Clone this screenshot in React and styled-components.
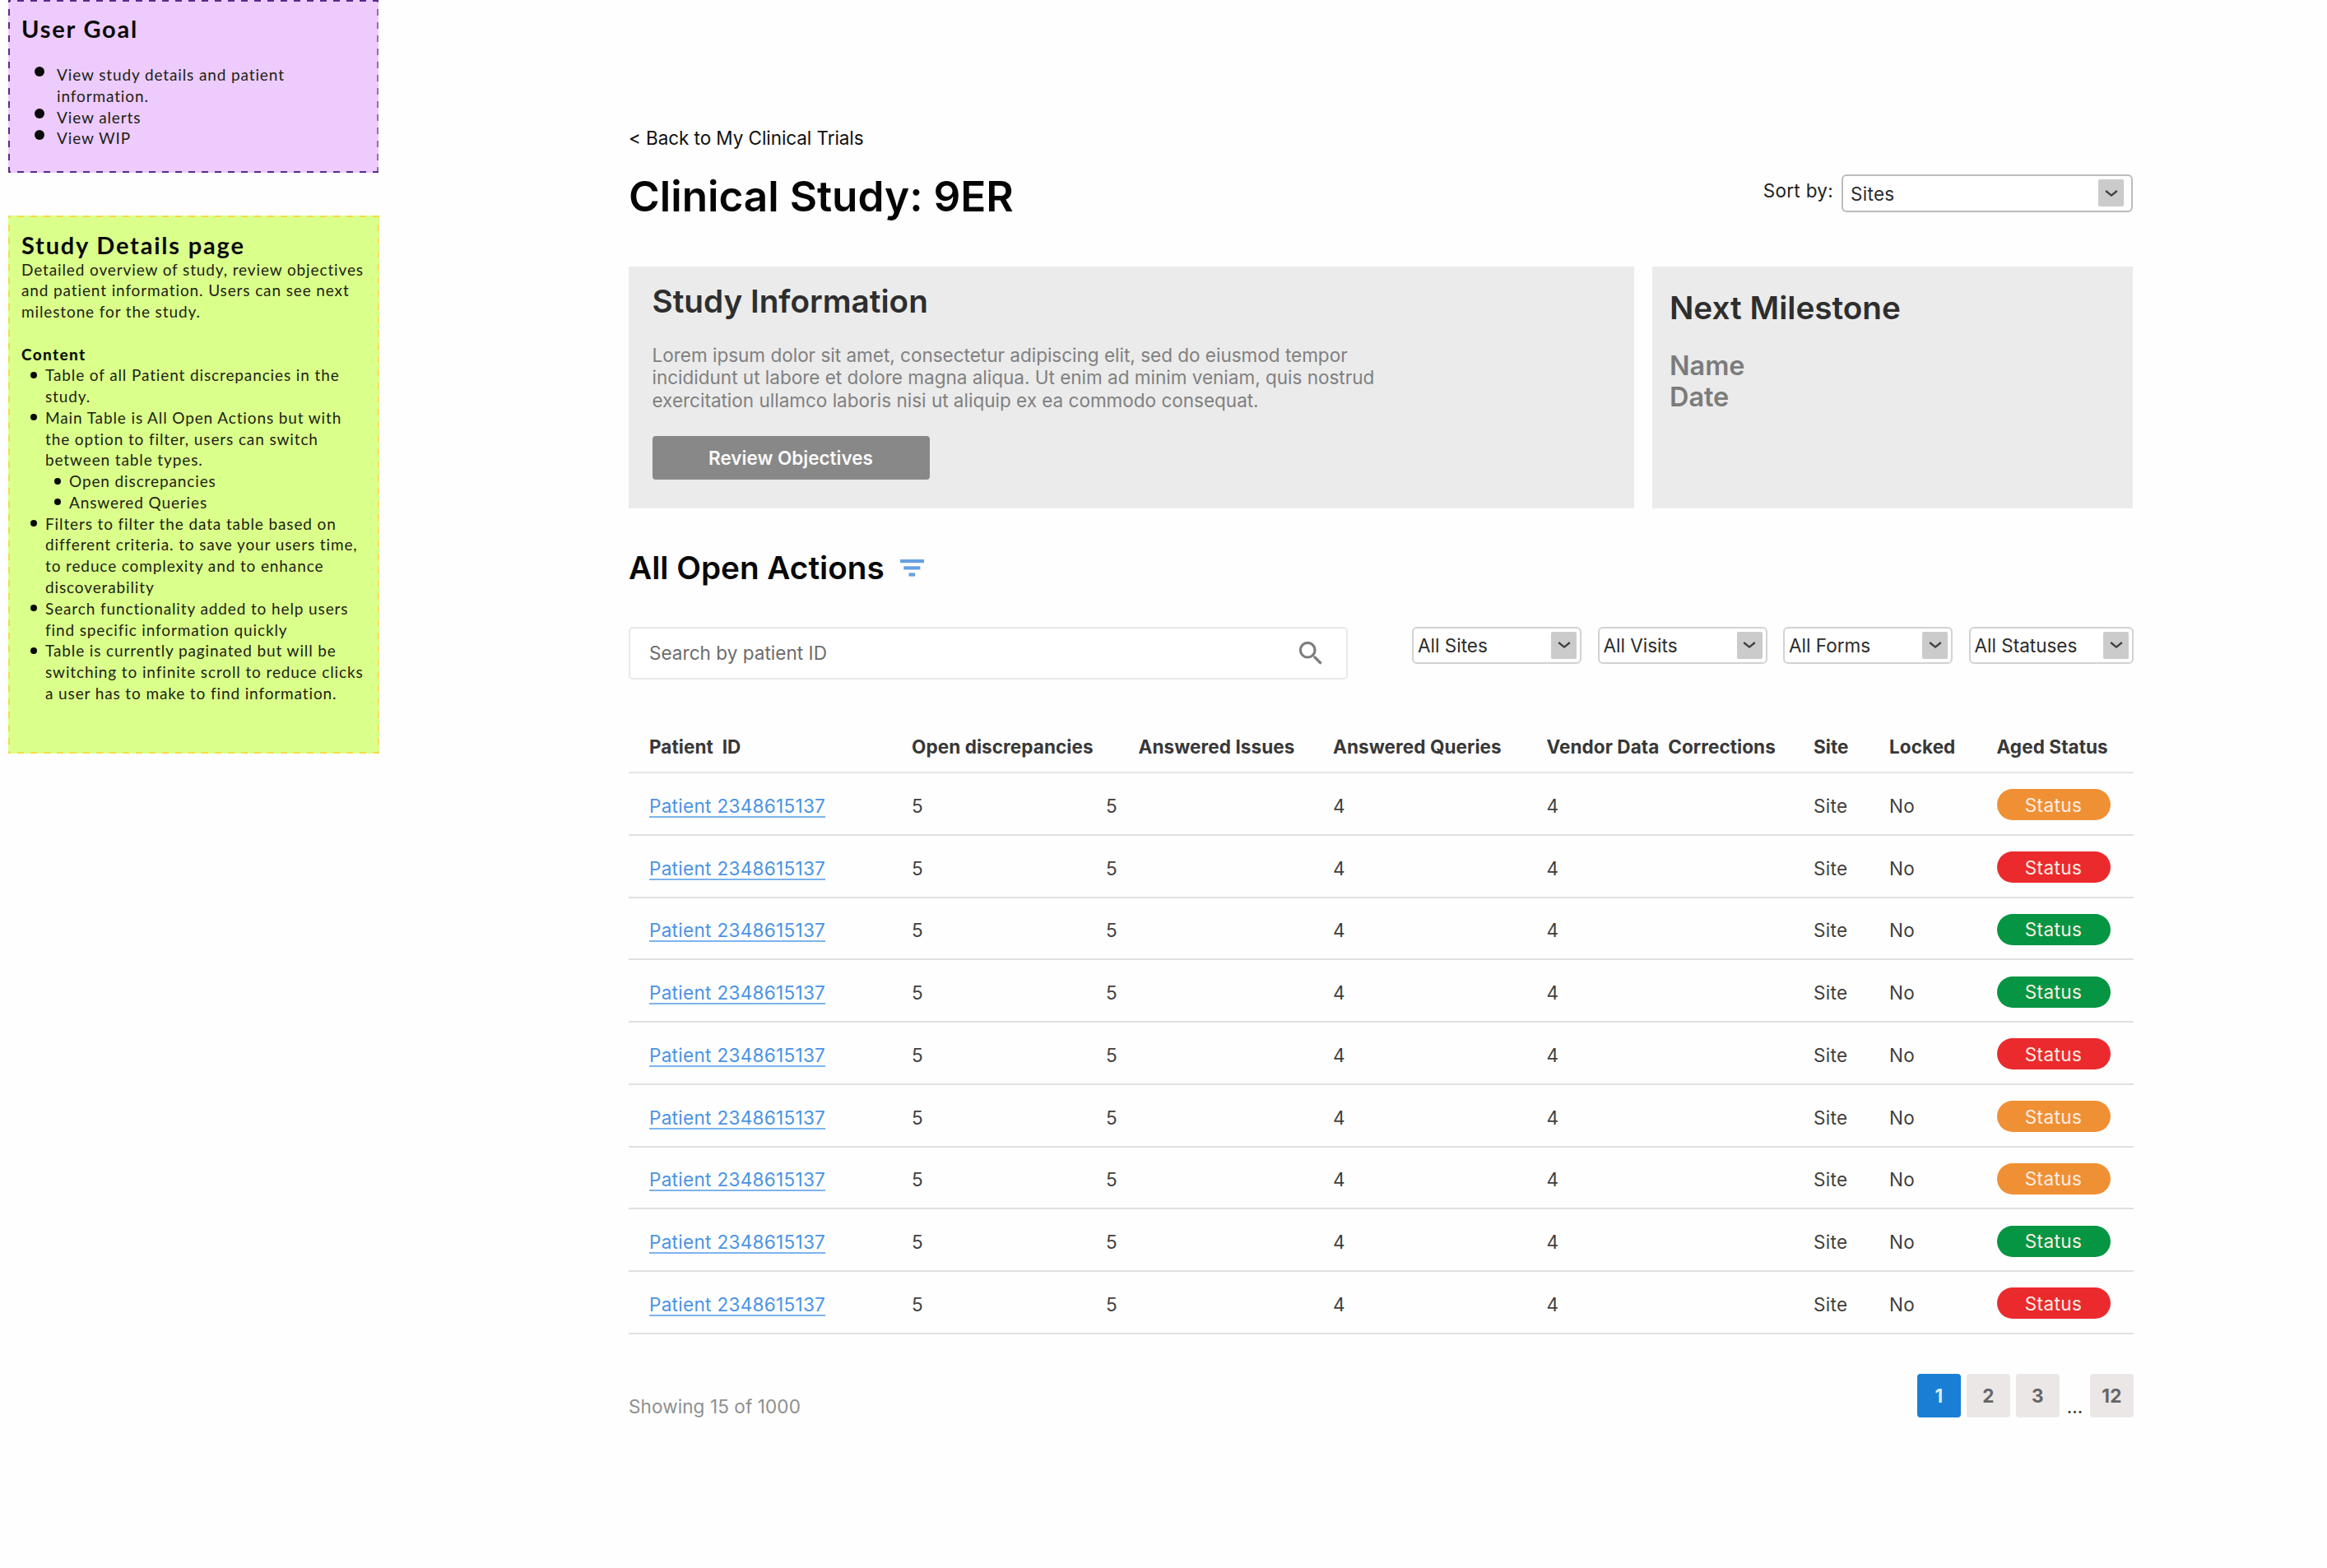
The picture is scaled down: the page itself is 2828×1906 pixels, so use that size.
import React from "react";
import styled, { createGlobalStyle, css } from "styled-components";

const GlobalStyle = createGlobalStyle`
  *, *::before, *::after { box-sizing: border-box; }
  body {
    margin: 0;
    background: #fefefe;
    color: #111;
    font-family: Inter, "Liberation Sans", sans-serif;
    font-size: 22.5px;
    line-height: 28px;
  }
  h1, h2, h3, p, ul { margin: 0; padding: 0; }
  ul { list-style: none; }
`;

const Page = styled.div`
  display: flex;
  align-items: flex-start;
  min-height: 1906px;
  padding-left: 10px;
`;

/* Notes column */

const Notes = styled.aside`
  display: flex;
  flex-direction: column;
  gap: 52px;
  width: 451px;
  font-family: Lato, "Open Sans", sans-serif;
  font-size: 19px;
  line-height: 25.77px;
  letter-spacing: 0.88px;
  white-space: nowrap;
`;

const dashes = (color, right) => css`
  background-image:
    repeating-linear-gradient(90deg, ${color} 0 8px, transparent 8px 16px),
    repeating-linear-gradient(90deg, ${color} 0 8px, transparent 8px 16px),
    repeating-linear-gradient(180deg, ${color} 0 8px, transparent 8px 16px),
    repeating-linear-gradient(180deg, ${right} 0 8px, transparent 8px 16px);
  background-repeat: no-repeat;
  background-size: calc(100% + 5px) 2px, calc(100% + 5px) 2px, 2px calc(100% + 5px), 2px calc(100% + 5px);
  background-position: -5px 0, -5px 100%, 0 -5px, 100% -5px;
`;

const GoalNote = styled.section`
  width: 450px;
  height: 210px;
  padding: 18px 0 0 16px;
  background-color: #edcbfd;
  ${dashes("#5a2a8a", "#9070b0")}
`;

const DetailsNote = styled.section`
  width: 451px;
  height: 654px;
  padding: 18.5px 0 0 16px;
  background-color: #dbff8b;
  ${dashes("#f5dc45", "#f5e060")}
`;

const NoteTitle = styled.h2`
  font-size: 29px;
  font-weight: 700;
  line-height: 34px;
  letter-spacing: 1.8px;
  color: #0a0a0a;
`;

const NoteText = styled.p`
  color: #1c1f14;
`;

const NoteSubtitle = styled.h3`
  margin-top: 25.77px;
  font-size: 19px;
  font-weight: 900;
  letter-spacing: 1.35px;
  color: #0d1206;
`;

const GoalList = styled.ul`
  margin-top: 26px;
`;

const NoteList = styled.ul``;

const Bullet = styled.li`
  display: flex;
  align-items: flex-start;
  padding-left: ${(p) => p.$indent}px;
  color: #1c1f14;

  &::before {
    content: "";
    flex: none;
    width: ${(p) => p.$dot}px;
    height: ${(p) => p.$dot}px;
    margin-top: ${(p) => p.$top}px;
    margin-right: ${(p) => p.$gap}px;
    border-radius: 50%;
    background: #0a0a0a;
  }
`;

/* Main column */

const Main = styled.main`
  display: flex;
  flex-direction: column;
  width: 1829px;
  margin-left: 303px;
  padding-top: 153.5px;
`;

const BackLink = styled.a`
  letter-spacing: -0.07px;
  color: #111;
`;

const Header = styled.header`
  display: flex;
  justify-content: space-between;
  height: 117px;
  margin-top: 25.5px;
  padding-right: 1px;
`;

const Title = styled.h1`
  font-size: 51.3px;
  font-weight: 600;
  line-height: 62px;
  color: #050505;
`;

const SortControl = styled.div`
  display: flex;
  align-items: flex-start;
  gap: 10px;
  padding-top: 5px;
  letter-spacing: 0.3px;
`;

const SortLabel = styled.span`
  padding-top: 6px;
  color: #222;
`;

const SelectBox = styled.div`
  display: flex;
  align-items: center;
  justify-content: space-between;
  width: ${(p) => p.$width}px;
  height: ${(p) => p.$height}px;
  padding: 1px ${(p) => p.$right}px 0 ${(p) => p.$left}px;
  border: 2px solid ${(p) => p.$border};
  border-radius: 6px;
  background: #fff;
  color: #2c2c2c;
  white-space: nowrap;
`;

const SelectArrow = styled.span`
  display: flex;
  align-items: center;
  justify-content: center;
  width: 31px;
  height: 33px;
  margin-top: -2px;
  border-radius: 2px;
  background: #cbcbcb;
`;

const Cards = styled.div`
  display: grid;
  grid-template-columns: 1222px 584px;
  gap: 22px;
  height: 294px;
`;

const Card = styled.section`
  padding: ${(p) => p.$pad};
  background: #ebebeb;
`;

const Heading = styled.h2`
  font-size: 38.7px;
  font-weight: 600;
  line-height: 48px;
  color: ${(p) => p.$color};
`;

const Summary = styled.p`
  margin-top: 28px;
  line-height: 27.4px;
  color: #808080;
`;

const ReviewButton = styled.button`
  display: block;
  width: 337px;
  height: 53px;
  margin-top: 30px;
  padding: 0;
  border: 0;
  border-radius: 4px;
  background: #888;
  color: #fafafa;
  font: 600 22.5px/28px Inter, sans-serif;
`;

const Milestone = styled.p`
  margin-top: 28px;
  font-size: 32.4px;
  font-weight: 600;
  line-height: 38.3px;
  color: #7b7b7b;
`;

const SectionHead = styled.div`
  display: flex;
  align-items: center;
  gap: 19px;
  margin-top: 48px;
`;

const Toolbar = styled.div`
  display: flex;
  justify-content: space-between;
  align-items: flex-start;
  margin-top: 48px;
`;

const SearchBox = styled.div`
  display: flex;
  align-items: center;
  justify-content: space-between;
  width: 874px;
  height: 64px;
  padding: 0 24px 0 23px;
  border: 2px solid #e9e9e9;
  border-radius: 5px;
  background: #fff;
  color: #6c6c6c;
  letter-spacing: 0.04px;
`;

const Filters = styled.div`
  display: flex;
  gap: 19.5px;
`;

const Table = styled.div`
  display: flex;
  flex-direction: column;
  margin-top: 51px;
`;

const HeadRow = styled.div`
  display: grid;
  grid-template-columns: 319px 275.5px 236.5px 259.5px 324.5px 92px 130.5px 1fr;
  align-items: center;
  height: 63px;
  padding: 1px 0 0 25px;
  border-bottom: 2px solid #e6e6e6;
  font-weight: 700;
  letter-spacing: 0.08px;
  color: #383838;
  white-space: pre;
`;

const Row = styled.div`
  display: grid;
  grid-template-columns: 319px 236px 276px 259.5px 324.5px 92px 130.5px 1fr;
  align-items: center;
  height: 75.75px;
  padding: 3px 0 0 25px;
  border-bottom: 2px solid #e0e0e0;
`;

const Cell = styled.span`
  padding-top: 3px;
  letter-spacing: 0.3px;
  color: #3f3f3f;
`;

const PatientLink = styled.a`
  padding-top: 3px;
  color: #4a93e4;
  letter-spacing: 0.31px;
  text-decoration: underline;
  text-decoration-color: #7db4ee;
  text-decoration-thickness: 2px;
  text-underline-offset: 4px;
  text-decoration-skip-ink: none;
`;

const tones = { orange: "#f09035", red: "#eb2a2d", green: "#069543" };

const Pill = styled.span`
  display: flex;
  align-items: center;
  justify-content: center;
  width: 138px;
  height: 38px;
  padding-top: 1px;
  border-radius: 19px;
  background: ${(p) => tones[p.$tone]};
  color: #fdeee2;
  letter-spacing: 0.4px;
`;

const Footer = styled.footer`
  display: flex;
  justify-content: space-between;
  align-items: flex-start;
  margin-top: 48px;
`;

const Count = styled.span`
  padding-top: 26px;
  color: #8f8f8f;
  letter-spacing: 0.1px;
`;

const Pager = styled.nav`
  display: flex;
  gap: 7px;
`;

const PageButton = styled.span`
  display: flex;
  align-items: center;
  justify-content: center;
  width: 53px;
  height: 53px;
  padding-top: 1px;
  border-radius: 4px;
  background: ${(p) => (p.$active ? "#1a7fd4" : "#ebe7e6")};
  color: ${(p) => (p.$active ? "#d9ecff" : "#666")};
  font-weight: 700;
  letter-spacing: 0.4px;
`;

const Ellipsis = styled.span`
  width: 23px;
  padding-top: 26px;
  text-align: center;
  color: #333;
`;

function Chevron() {
  return (
    <svg width="16" height="10" viewBox="0 0 16 10" fill="none">
      <path d="M1.2 2L8 7.6L14.8 2" stroke="#3f3f3f" strokeWidth="2.3" />
    </svg>
  );
}

function FilterIcon() {
  return (
    <svg width="29" height="21" viewBox="0 0 29 21" fill="#67a0e2">
      <rect x="0" y="0" width="29" height="4.2" />
      <rect x="4.3" y="8.3" width="20" height="4.2" />
      <rect x="10.5" y="16.4" width="7.6" height="4.2" />
    </svg>
  );
}

function SearchIcon() {
  return (
    <svg width="38.4" height="38.4" viewBox="0 0 24 24" fill="#7d7d7d">
      <path d="M15.5 14h-.79l-.28-.27A6.471 6.471 0 0 0 16 9.5 6.5 6.5 0 1 0 9.5 16c1.61 0 3.09-.59 4.23-1.57l.27.28v.79l5 4.99L20.49 19l-4.99-5zm-6 0C7.01 14 5 11.99 5 9.5S7.01 5 9.5 5 14 7.01 14 9.5 11.99 14 9.5 14z" />
    </svg>
  );
}

function Select({ label, width, height = 45, left = 5, right = 4, border = "#d2d2d2" }) {
  return (
    <SelectBox $width={width} $height={height} $left={left} $right={right} $border={border}>
      <span>{label}</span>
      <SelectArrow>
        <Chevron />
      </SelectArrow>
    </SelectBox>
  );
}

function Lines({ of }) {
  return (
    <span>
      {of.map((line, i) => (
        <React.Fragment key={line}>
          {i > 0 && <br />}
          {line}
        </React.Fragment>
      ))}
    </span>
  );
}

const goals = [["View study details and patient", "information."], ["View alerts"], ["View WIP"]];

const contents = [
  { lines: ["Table of all Patient discrepancies in the", "study."] },
  { lines: ["Main Table is All Open Actions but with", "the option to filter, users can switch", "between table types."] },
  { lines: ["Open discrepancies"], nested: true },
  { lines: ["Answered Queries"], nested: true },
  {
    lines: [
      "Filters to filter the data table based on",
      "different criteria. to save your users time,",
      "to reduce complexity and to enhance",
      "discoverability",
    ],
  },
  { lines: ["Search functionality added to help users", "find specific information quickly"] },
  {
    lines: [
      "Table is currently paginated but will be",
      "switching to infinite scroll to reduce clicks",
      "a user has to make to find information.",
    ],
  },
];

const columns = [
  "Patient  ID",
  "Open discrepancies",
  "Answered Issues",
  "Answered Queries",
  "Vendor Data  Corrections",
  "Site",
  "Locked",
  "Aged Status",
];

const statuses = ["orange", "red", "green", "green", "red", "orange", "orange", "green", "red"];

export default function App() {
  return (
    <>
      <GlobalStyle />
      <Page>
        <Notes>
          <GoalNote>
            <NoteTitle>User Goal</NoteTitle>
            <GoalList>
              {goals.map((lines) => (
                <Bullet key={lines[0]} $indent={16} $dot={12} $top={2.5} $gap={15}>
                  <Lines of={lines} />
                </Bullet>
              ))}
            </GoalList>
          </GoalNote>
          <DetailsNote>
            <NoteTitle>Study Details page</NoteTitle>
            <NoteText>
              <Lines
                of={[
                  "Detailed overview of study, review objectives",
                  "and patient information. Users can see next",
                  "milestone for the study.",
                ]}
              />
            </NoteText>
            <NoteSubtitle>Content</NoteSubtitle>
            <NoteList>
              {contents.map((item) => (
                <Bullet key={item.lines[0]} $indent={item.nested ? 39.5 : 10.5} $dot={8} $top={8.5} $gap={10.5}>
                  <Lines of={item.lines} />
                </Bullet>
              ))}
            </NoteList>
          </DetailsNote>
        </Notes>

        <Main>
          <BackLink>&lt; Back to My Clinical Trials</BackLink>
          <Header>
            <Title>Clinical Study: 9ER</Title>
            <SortControl>
              <SortLabel>Sort by:</SortLabel>
              <Select label="Sites" width={354} height={46} left={9} right={9} border="#bcbcbc" />
            </SortControl>
          </Header>

          <Cards>
            <Card $pad="18px 0 0 28.5px">
              <Heading $color="#2e2e2e">Study Information</Heading>
              <Summary>
                <Lines
                  of={[
                    "Lorem ipsum dolor sit amet, consectetur adipiscing elit, sed do eiusmod tempor",
                    "incididunt ut labore et dolore magna aliqua. Ut enim ad minim veniam, quis nostrud",
                    "exercitation ullamco laboris nisi ut aliquip ex ea commodo consequat.",
                  ]}
                />
              </Summary>
              <ReviewButton>Review Objectives</ReviewButton>
            </Card>
            <Card $pad="26px 0 0 21px">
              <Heading $color="#2e2e2e">Next Milestone</Heading>
              <Milestone>
                <Lines of={["Name", "Date"]} />
              </Milestone>
            </Card>
          </Cards>

          <SectionHead>
            <Heading $color="#080808">All Open Actions</Heading>
            <FilterIcon />
          </SectionHead>

          <Toolbar>
            <SearchBox>
              <span>Search by patient ID</span>
              <SearchIcon />
            </SearchBox>
            <Filters>
              <Select label="All Sites" width={206} />
              <Select label="All Visits" width={206} />
              <Select label="All Forms" width={206} />
              <Select label="All Statuses" width={200.5} />
            </Filters>
          </Toolbar>

          <Table>
            <HeadRow>
              {columns.map((name) => (
                <span key={name}>{name}</span>
              ))}
            </HeadRow>
            {statuses.map((tone, i) => (
              <Row key={i}>
                <PatientLink>Patient 2348615137</PatientLink>
                <Cell>5</Cell>
                <Cell>5</Cell>
                <Cell>4</Cell>
                <Cell>4</Cell>
                <Cell>Site</Cell>
                <Cell>No</Cell>
                <Pill $tone={tone}>Status</Pill>
              </Row>
            ))}
          </Table>

          <Footer>
            <Count>Showing 15 of 1000</Count>
            <Pager>
              <PageButton $active>1</PageButton>
              <PageButton>2</PageButton>
              <PageButton>3</PageButton>
              <Ellipsis>...</Ellipsis>
              <PageButton>12</PageButton>
            </Pager>
          </Footer>
        </Main>
      </Page>
    </>
  );
}
